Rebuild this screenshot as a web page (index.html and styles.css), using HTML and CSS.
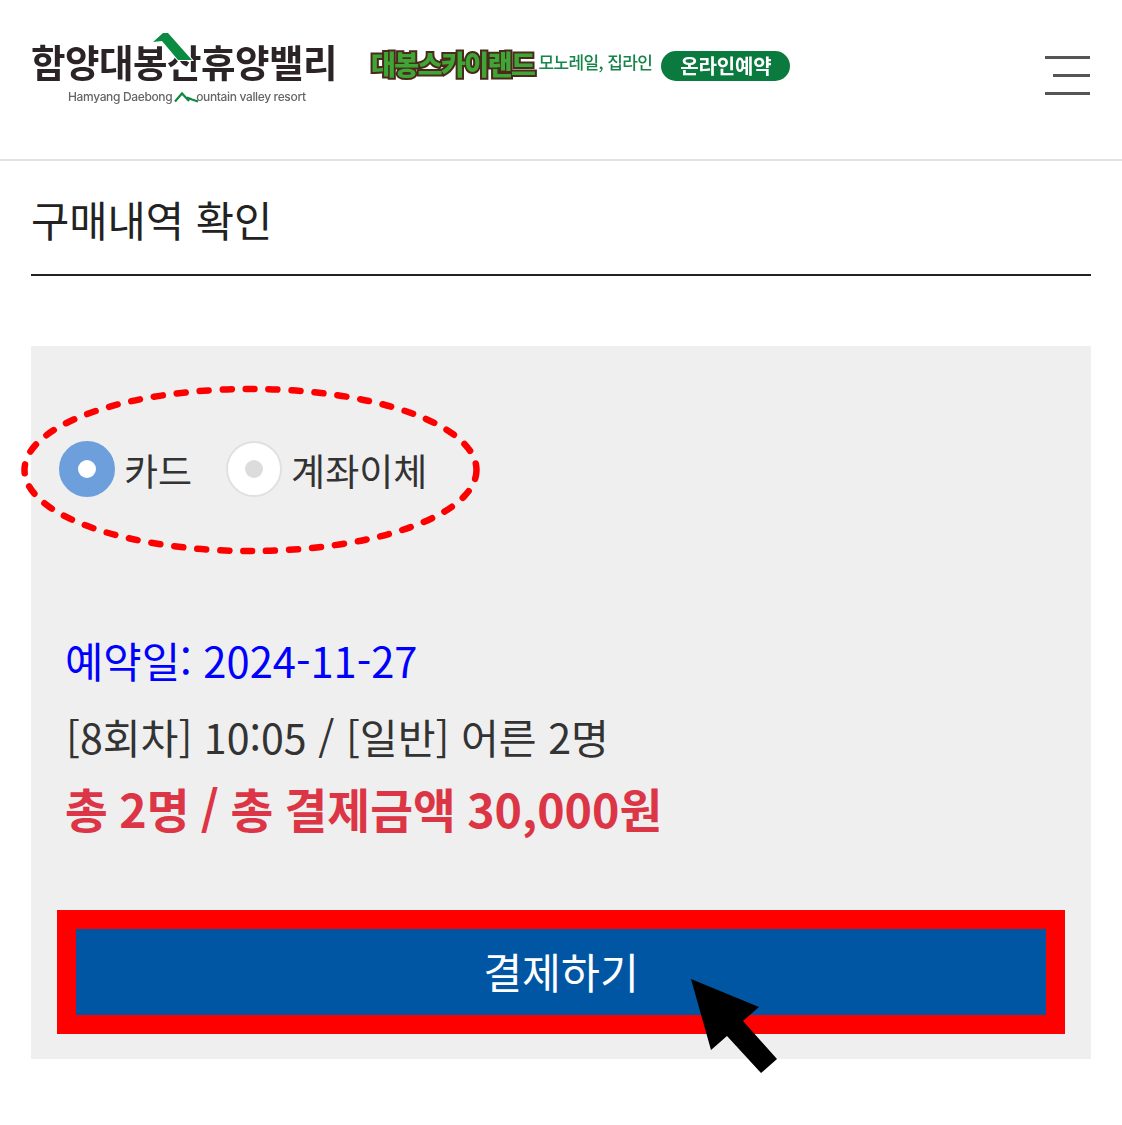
FILE: index.html
```html
<!DOCTYPE html>
<html lang="ko">
<head>
  <meta charset="UTF-8" />
  <title>구매내역 확인</title>
  <link rel="stylesheet" href="styles.css">
</head>
<body>
  <header class="top">
    <div class="logo">
      <div class="logo-name">함양대봉산휴양밸리</div>
      <div class="logo-sub">Hamyang Daebong <span class="logo-m"></span>ountain valley resort</div>
      <svg class="logo-roof" width="50" height="34" viewBox="0 0 50 34"><path d="M3 11 L13 2 L18 2 L42 29 L28 29 L12 10 Z" fill="#0b8a41" stroke="#fff" stroke-width="2" paint-order="stroke"/></svg>
      <svg class="logo-peak" width="26" height="14" viewBox="0 0 26 14"><path d="M1 11.5 L8 3.5 L15 11 M13 7.5 L18 9.5 L24 11.5" fill="none" stroke="#0b8a41" stroke-width="2.2"/></svg>
    </div>
    <div class="sky">대봉스카이랜드</div>
    <div class="sky-sub">모노레일, 집라인</div>
    <div class="reserve">온라인예약</div>
    <div class="menu"><span></span><span class="short"></span><span></span></div>
  </header>

  <main class="page">
    <h1 class="title">구매내역 확인</h1>
    <section class="panel">
      <div class="pay-types">
        <label class="pay"><span class="radio on"></span>카드</label>
        <label class="pay"><span class="radio"></span>계좌이체</label>
      </div>
      <p class="date">예약일: 2024-11-27</p>
      <p class="item">[8회차] 10:05 / [일반] 어른 2명</p>
      <p class="total">총 2명 / 총 결제금액 30,000원</p>
      <button class="pay-btn">결제하기</button>
    </section>
  </main>

  <svg class="marks" width="1122" height="1125" viewBox="0 0 1122 1125">
    <ellipse cx="250.5" cy="470" rx="226" ry="81" fill="none" stroke="#ff0000" stroke-width="6.5" stroke-linecap="round" stroke-dasharray="9 14"/>
    <path d="M691 979 L759 1007 L743 1021 L777 1059 L761 1073 L727 1036 L711 1050 Z" fill="#000"/>
  </svg>
</body>
</html>
```

FILE: styles.css
```css
* { box-sizing: border-box; }

html, body {
  margin: 0;
  background: #fff;
  font-family: "Noto Sans CJK KR", "Noto Sans", sans-serif;
  color: #222;
}

body {
  position: relative;
  height: 1125px;
  overflow: hidden;
}

.top {
  display: flex;
  align-items: flex-start;
  height: 161px;
  padding: 0 32px 0 31px;
  border-bottom: 2px solid #e2e2e2;
}

/* the logo strip is a scaled-up image in the original, so it stays a bit soft */
.logo, .sky, .sky-sub, .reserve, .menu { filter: blur(0.4px); }

.logo {
  position: relative;
  width: 340px;
  padding-top: 36px;
  flex: none;
}

.logo-name {
  font-size: 37.5px;
  line-height: 50px;
  font-weight: 700;
  letter-spacing: -0.5px;
  color: #2b2325;
  white-space: nowrap;
}

.logo-sub {
  margin: 2px 0 0 37px;
  font-family: "Inter", sans-serif;
  font-size: 12px;
  line-height: 18px;
  font-weight: 500;
  letter-spacing: -0.35px;
  color: #666;
  white-space: nowrap;
}

.logo-m {
  display: inline-block;
  width: 21px;
}

.logo-roof {
  position: absolute;
  left: 119px;
  top: 31px;
}

.logo-peak {
  position: absolute;
  left: 143px;
  top: 90px;
}

.sky {
  margin-top: 45px;
  font-size: 27px;
  line-height: 38px;
  font-weight: 900;
  letter-spacing: -1.5px;
  color: #3fa535;
  -webkit-text-stroke: 4px #4a2a1c;
  paint-order: stroke fill;
  white-space: nowrap;
}

.sky-sub {
  margin: 50px 0 0 4px;
  font-size: 17px;
  line-height: 24px;
  font-weight: 500;
  letter-spacing: -0.6px;
  color: #17844a;
  white-space: nowrap;
}

.reserve {
  margin: 51px 0 0 9px;
  width: 129px;
  height: 30px;
  border-radius: 15px;
  background: #0a7a3f;
  color: #fff;
  font-size: 20px;
  line-height: 29px;
  font-weight: 700;
  text-align: center;
  letter-spacing: -0.2px;
}

.menu {
  display: flex;
  flex-direction: column;
  align-items: flex-end;
  gap: 15px;
  width: 45px;
  margin: 56px 0 0 auto;
}

.menu span {
  width: 45px;
  height: 3px;
  background: #555;
}

.menu .short { width: 37px; }

.page { padding: 0 31px; }

.title {
  margin: 0;
  height: 115px;
  padding-top: 28px;
  font-size: 41.6px;
  line-height: 60px;
  font-weight: 400;
  border-bottom: 2px solid #222;
}

.panel {
  margin-top: 70px;
  height: 713px;
  padding: 95px 26px 0;
  background: #efefef;
}

.pay-types {
  display: flex;
  gap: 34px;
  padding-left: 2px;
  height: 56px;
  margin-bottom: 125px;
}

.pay {
  display: flex;
  align-items: center;
  gap: 9px;
  padding-top: 2px;
  font-size: 37px;
  color: #333;
}

.radio {
  display: block;
  width: 56px;
  height: 56px;
  margin-top: -2px;
  border-radius: 50%;
  border: 2px solid #e0e0e0;
  background: #fff;
  position: relative;
}

.radio::after {
  content: "";
  position: absolute;
  left: 17px;
  top: 17px;
  width: 18px;
  height: 18px;
  border-radius: 50%;
  background: #dcdcdc;
}

.radio.on {
  background: #6c9fdc;
  border-color: #6c9fdc;
}

.radio.on::after { background: #fff; }

.date, .item, .total {
  margin: 0 0 0 9px;
  font-size: 41.15px;
  line-height: 76px;
  white-space: nowrap;
}

.date {
  margin-left: 8px;
  font-size: 41.7px;
  color: #0000ff;
}

.item { color: #333; }

.total {
  margin-left: 8px;
  font-size: 46.5px;
  line-height: 68px;
  font-weight: 700;
  word-spacing: -1.6px;
  color: #dc3545;
}

.pay-btn {
  display: block;
  width: 1008px;
  height: 124px;
  margin-top: 68px;
  border: 19px solid #ff0000;
  background: #0056a3;
  color: #fff;
  font-family: inherit;
  font-size: 42.3px;
  padding: 0 0 3px;
}

.marks {
  position: absolute;
  left: 0;
  top: 0;
  pointer-events: none;
}
```
